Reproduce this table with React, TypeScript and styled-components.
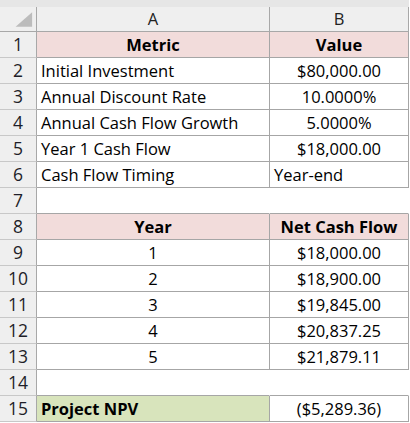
import styled, { createGlobalStyle } from 'styled-components';

const GlobalStyle = createGlobalStyle`
  html, body {
    margin: 0;
    padding: 0;
    background: #ffffff;
  }
  body {
    font-family: "Open Sans", "Liberation Sans", sans-serif;
  }
`;

type Fill = 'none' | 'pink' | 'green';
type Align = 'left' | 'center';

interface Row {
  a?: string;
  b?: string;
  fill?: Fill;
  bold?: boolean;
  aAlign?: Align;
  bAlign?: Align;
  plain?: boolean;
  greenA?: boolean;
}

const rows: Row[] = [
  { a: 'Metric', b: 'Value', fill: 'pink', bold: true, aAlign: 'center' },
  { a: 'Initial Investment', b: '$80,000.00' },
  { a: 'Annual Discount Rate', b: '10.0000%' },
  { a: 'Annual Cash Flow Growth', b: '5.0000%' },
  { a: 'Year 1 Cash Flow', b: '$18,000.00' },
  { a: 'Cash Flow Timing', b: 'Year-end', bAlign: 'left' },
  { plain: true },
  { a: 'Year', b: 'Net Cash Flow', fill: 'pink', bold: true, aAlign: 'center' },
  { a: '1', b: '$18,000.00', aAlign: 'center' },
  { a: '2', b: '$18,900.00', aAlign: 'center' },
  { a: '3', b: '$19,845.00', aAlign: 'center' },
  { a: '4', b: '$20,837.25', aAlign: 'center' },
  { a: '5', b: '$21,879.11', aAlign: 'center' },
  { plain: true },
  { a: 'Project NPV', b: '($5,289.36)', greenA: true },
];

const fills: Record<Fill, string> = {
  none: '#ffffff',
  pink: '#f2dcdb',
  green: '#d8e4bc',
};

const App = () => {
  return (
    <>
      <GlobalStyle />
      <Sheet>
        <TopStrip />
        <Corner>
          <svg width="37" height="25" viewBox="0 0 37 25">
            <polygon points="16,20 33,20 33,5" fill="#bcbcbc" />
          </svg>
        </Corner>
        <ColHead>A</ColHead>
        <ColHead>B</ColHead>
        {rows.map((r, i) => (
          <RowGroup key={i} r={r} n={i + 1} />
        ))}
      </Sheet>
    </>
  );
};

const RowGroup = ({ r, n }: { r: Row; n: number }) => {
  const fillA: Fill = r.greenA ? 'green' : r.fill ?? 'none';
  const fillB: Fill = r.fill ?? 'none';
  return (
    <>
      <RowNum>{n}</RowNum>
      <Cell $fill={fillA} $align={r.aAlign ?? 'left'} $bold={!!r.bold || !!r.greenA} $plain={!!r.plain}>
        {r.a}
      </Cell>
      <Cell $fill={fillB} $align={r.bAlign ?? 'center'} $bold={!!r.bold} $plain={!!r.plain}>
        {r.b}
      </Cell>
    </>
  );
};

export default App;

const Sheet = styled.div`
  display: grid;
  grid-template-columns: 37px 233px 139px;
  grid-template-rows: 7px 25px repeat(15, 26px);
  width: 410px;
  height: 423px;
  background: #ffffff;
  color: #000000;
  font-size: 16.5px;
  line-height: 1.25;
  overflow: hidden;
`;

const TopStrip = styled.div`
  grid-column: 1 / -1;
  background: #e6e6e6;
`;

const Corner = styled.div`
  background: #efefef;
  border-right: 1px solid #a8a8a8;
  border-bottom: 1px solid #a8a8a8;
  box-sizing: border-box;
  display: flex;
  svg {
    display: block;
  }
`;

const ColHead = styled.div`
  background: #efefef;
  border-right: 1px solid #a8a8a8;
  border-bottom: 1px solid #a8a8a8;
  box-sizing: border-box;
  display: flex;
  align-items: flex-end;
  justify-content: center;
  padding-bottom: 1px;
  color: #222222;
  font-size: 16.5px;
`;

const RowNum = styled.div`
  background: #efefef;
  border-right: 1px solid #a8a8a8;
  border-bottom: 1px solid #c8c8c8;
  box-sizing: border-box;
  display: flex;
  align-items: flex-end;
  justify-content: center;
  padding-bottom: 1px;
  color: #1e1e28;
  font-size: 17.5px;
`;

const Cell = styled.div<{ $fill: Fill; $align: Align; $bold: boolean; $plain: boolean }>`
  background: ${({ $fill }) => fills[$fill]};
  border-right: 1px solid ${({ $plain }) => ($plain ? '#ffffff' : '#a6a6a6')};
  border-bottom: 1px solid #a6a6a6;
  box-sizing: border-box;
  display: flex;
  align-items: flex-end;
  justify-content: ${({ $align }) => ($align === 'center' ? 'center' : 'flex-start')};
  padding: 0 4px 1px 4px;
  font-weight: ${({ $bold }) => ($bold ? 700 : 400)};
  white-space: nowrap;
`;
